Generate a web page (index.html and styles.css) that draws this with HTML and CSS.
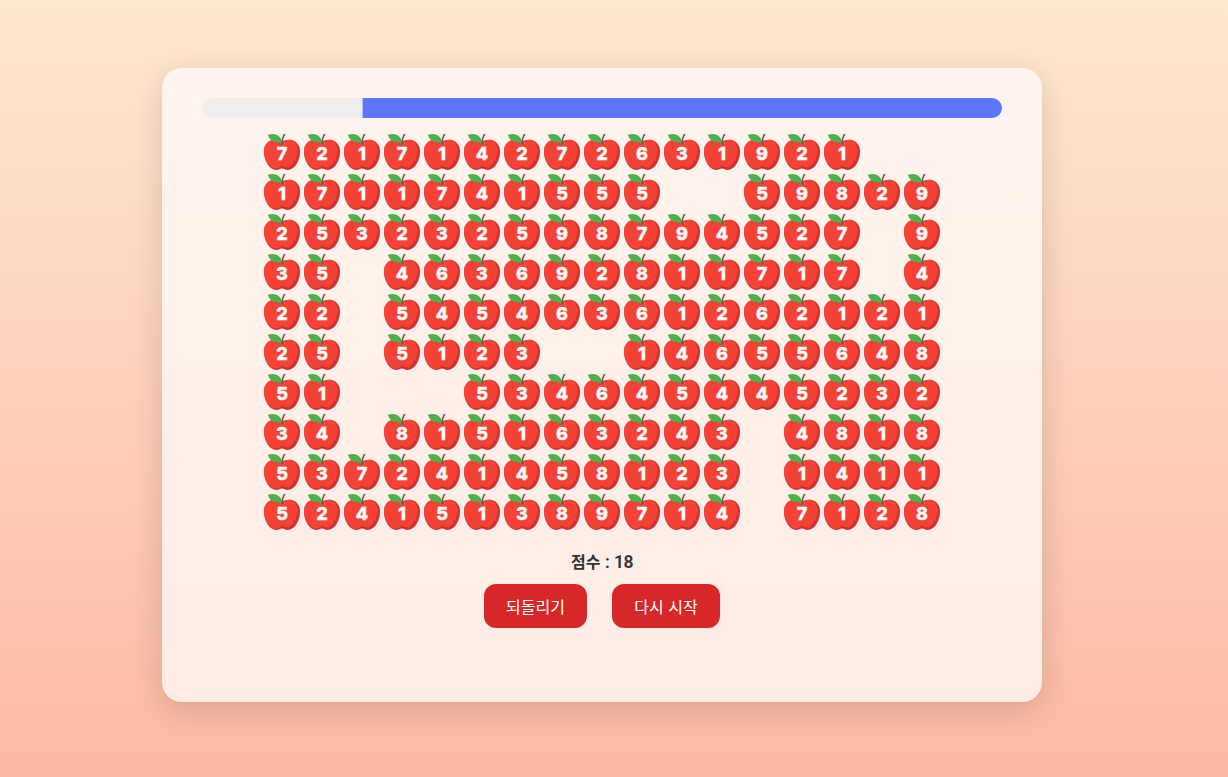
FILE: index.html
```html
<!DOCTYPE html>
<html lang="ko">
<head>
<meta charset="utf-8">
<title>사과 게임</title>
<link rel="stylesheet" href="styles.css">
</head>
<body>
<svg class="defs" width="0" height="0">
  <symbol id="apple" viewBox="0 0 36 38">
    <path fill="#d32f2f" d="M18 8.600C21 7.200 25 6.200 28.500 7.300C33 8.700 36 12.800 36 18.500C36 27 31 37 23.500 37C21.200 37 20.200 35.400 18 35.400C15.800 35.400 14.800 37 12.500 37C5 37 0 27 0 18.500C0 12.800 3 8.700 7.500 7.300C11 6.200 15 7.200 18 8.600Z"/>
    <path fill="#f44336" d="M18 8.600C21 7.200 24.500 6.200 27.500 7C31.500 8.300 33.600 12.200 33.600 17.400C33.600 25 28.500 34.200 22.200 34.200C20.500 34.200 19.700 32.700 18 32.700C16.300 32.700 15.300 35.700 12.500 35.600C5 35.400 0 27 0 18.500C0 12.800 3 8.700 7.500 7.300C11 6.200 15 7.200 18 8.600Z"/>
    <path fill="#4caf50" d="M3.800 2C6.500 .8 10.500 .6 13.500 2.200C17 4.200 18.200 7 18.300 11C15.500 8.800 12.500 9.500 9.500 8.500C6 7.300 5 4.300 3.800 2Z"/>
    <path fill="none" stroke="#795548" stroke-width="1.600" stroke-linecap="round" d="M18.300 10.800Q18 4.800 20.600 1.500"/>
  </symbol>
</svg>
<main class="card">
  <div class="timer"><div class="timer-fill"></div></div>
  <div class="board" id="board"></div>
  <p class="score">점수 <span class="score-value">: 18</span></p>
  <div class="actions">
    <button class="btn btn-undo">되돌리기</button>
    <button class="btn btn-restart">다시 시작</button>
  </div>
</main>
<script src="board.js"></script>
</body>
</html>
```
FILE: styles.css
```css
* { box-sizing: border-box; }
body {
  margin: 0;
  height: 777px;
  padding: 68px 0 0 162px;
  overflow: hidden;
  background: linear-gradient(180deg, #ffe8d0 0%, #fcb9a2 100%);
  font-family: "Noto Sans CJK KR", sans-serif;
}
.defs { display: none; }
.card {
  width: 880px;
  height: 634px;
  padding: 30px 40px;
  border-radius: 20px;
  background: linear-gradient(180deg, #fff5ee, #feece5);
  box-shadow: 0 8px 32px rgba(0, 0, 0, 0.15);
  display: flex;
  flex-direction: column;
  align-items: center;
}
.timer {
  width: 800px;
  height: 20px;
  border-radius: 10px;
  overflow: hidden;
  background: #eee;
}
.timer-fill {
  height: 20px;
  background: linear-gradient(90deg, transparent 160px, #b4bdf4 160px, #b4bdf4 161px, #5c75fa 161px);
}
.board {
  margin-top: 14px;
  display: grid;
  grid-template-columns: repeat(17, 40px);
  grid-auto-rows: 40px;
}
.cell { display: grid; justify-items: center; }
.apple { grid-area: 1 / 1; width: 36px; height: 38px; margin-top: 1px; }
.num {
  grid-area: 1 / 1;
  z-index: 1;
  padding-top: 10px;
  font: 800 18px/24px Inter, sans-serif;
  -webkit-text-stroke: 0.3px #fff;
  color: #fff;
}
.score {
  margin: 18px 0 0;
  height: 24px;
  font-size: 16px;
  line-height: 23px;
  font-weight: 700;
  color: #333;
}
.score-value {
  font: 600 17.5px/23px Roboto, sans-serif;
  letter-spacing: -0.5px;
  word-spacing: 1px;
}
.actions { display: flex; gap: 25px; margin-top: 10px; }
.btn {
  height: 44px;
  padding: 0 0 1px;
  border: 0;
  border-radius: 12px;
  background: #d62828;
  color: #fff;
  font: 400 16px/24px "Noto Sans CJK KR", sans-serif;
}
.btn-undo { width: 103px; }
.btn-restart { width: 108px; }
```
FILE: board.js
```js
const rows = [
  "721714272631921..",
  "1711741555..59829",
  "253232598794527.9",
  "35.463692811717.4",
  "22.54546361262121",
  "25.5123..14655648",
  "51...534645445232",
  "34.815163243.4818",
  "537241458123.1411",
  "524151389714.7128"
];
document.getElementById("board").innerHTML = rows.join("").split("").map(n =>
  n === "." ? '<div class="cell"></div>' :
  `<div class="cell"><svg class="apple"><use href="#apple"/></svg><span class="num">${n}</span></div>`
).join("");
```
